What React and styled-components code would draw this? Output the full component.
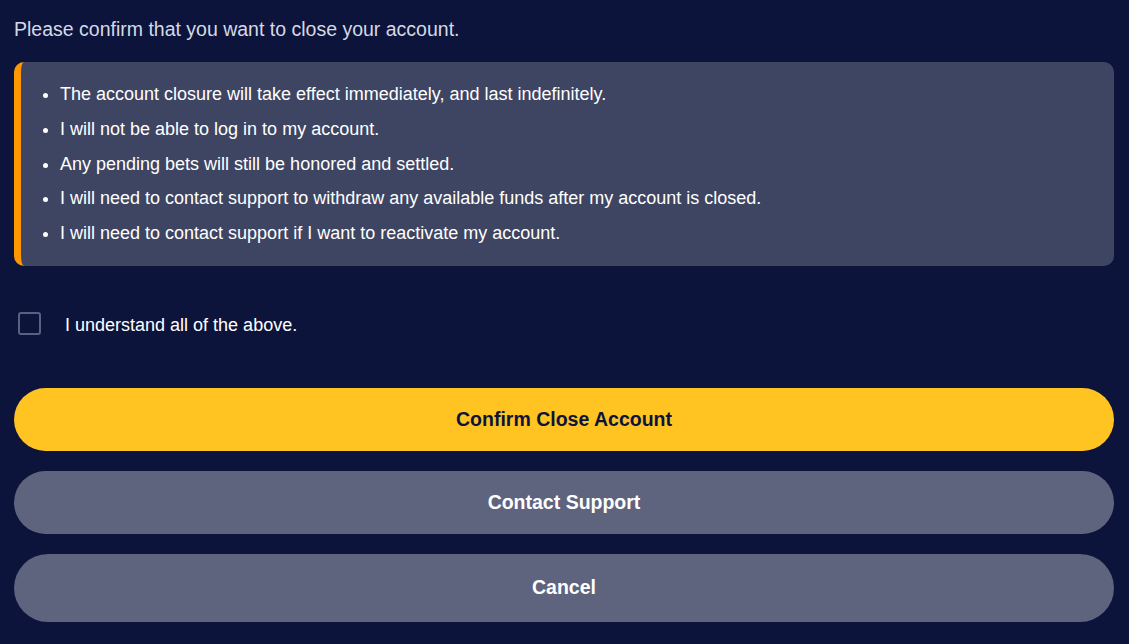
import React from "react";
import styled, { createGlobalStyle } from "styled-components";

const Global = createGlobalStyle`
  html, body { margin: 0; padding: 0; background: #0d143c; }
  body { font-family: "Liberation Sans", Arial, sans-serif; }
`;

const Page = styled.div`
  background: #0d143c;
  min-height: 644px;
  padding: 17px 15px 0 14px;
  box-sizing: border-box;
  display: flex;
  flex-direction: column;
`;

const Title = styled.p`
  margin: 0;
  font-size: 19.5px;
  line-height: 24px;
  color: #d6d9e4;
`;

const Notice = styled.div`
  margin-top: 21px;
  background: #3e4562;
  border-left: 7px solid #ff9800;
  border-radius: 10px;
  padding: 15px 0 15px 0;
`;

const List = styled.ul`
  margin: 0;
  padding: 0 0 0 39px;
  list-style: disc;
  color: #ffffff;
`;

const Item = styled.li`
  font-size: 18px;
  line-height: 34.75px;
`;

const CheckRow = styled.label`
  display: flex;
  align-items: flex-start;
  gap: 24px;
  margin-top: 46px;
  padding-left: 4px;
  cursor: pointer;
`;

const Box = styled.span`
  width: 23px;
  height: 23px;
  box-sizing: border-box;
  border: 2px solid #5a6080;
  border-radius: 3px;
  flex: none;
`;

const CheckText = styled.span`
  color: #ffffff;
  font-size: 18px;
  line-height: 24px;
  margin-top: 1px;
`;

const Actions = styled.div`
  display: flex;
  flex-direction: column;
  gap: 20px;
  margin-top: 51px;
`;

const Button = styled.button`
  border: none;
  width: 100%;
  height: ${(p) => p.$h || 63}px;
  border-radius: 999px;
  font-family: "Liberation Sans", Arial, sans-serif;
  font-weight: 700;
  font-size: 19.5px;
  background: ${(p) => (p.$primary ? "#ffc322" : "#5e637e")};
  color: ${(p) => (p.$primary ? "#0d143c" : "#ffffff")};
  cursor: pointer;
`;

export default function App() {
  return (
    <>
      <Global />
      <Page>
        <Title>Please confirm that you want to close your account.</Title>
        <Notice>
          <List>
            <Item>The account closure will take effect immediately, and last indefinitely.</Item>
            <Item>I will not be able to log in to my account.</Item>
            <Item>Any pending bets will still be honored and settled.</Item>
            <Item>I will need to contact support to withdraw any available funds after my account is closed.</Item>
            <Item>I will need to contact support if I want to reactivate my account.</Item>
          </List>
        </Notice>
        <CheckRow>
          <Box />
          <CheckText>I understand all of the above.</CheckText>
        </CheckRow>
        <Actions>
          <Button $primary>Confirm Close Account</Button>
          <Button>Contact Support</Button>
          <Button $h={68}>Cancel</Button>
        </Actions>
      </Page>
    </>
  );
}
